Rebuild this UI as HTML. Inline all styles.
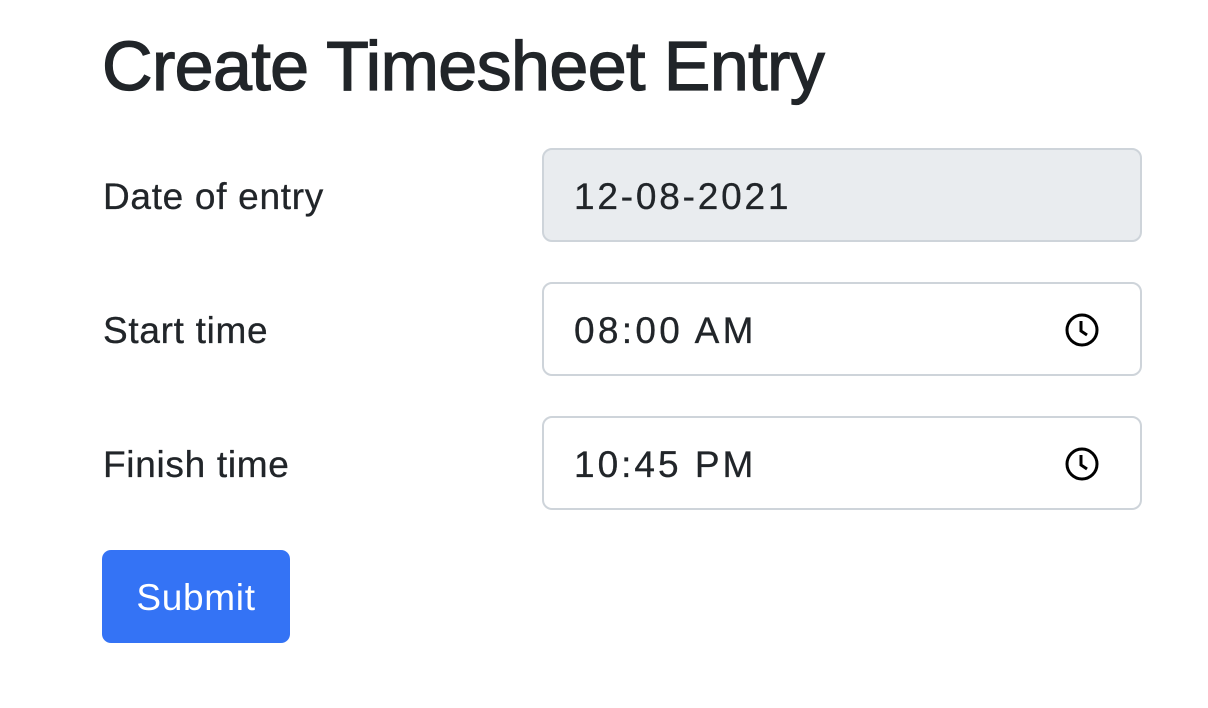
<!DOCTYPE html>
<html><head><style>
body{margin:0;width:1208px;height:708px;background:#fff;font-family:"Liberation Sans",sans-serif;color:#212529;position:relative;overflow:hidden}
h1{position:absolute;left:102px;top:24px;margin:0;font-size:70px;font-weight:400;line-height:84px;letter-spacing:-0.6px;-webkit-text-stroke:1.3px #212529}
.lbl{position:absolute;left:103px;font-size:37px;line-height:44px;letter-spacing:0.7px;-webkit-text-stroke:0.3px #212529}
.inp{position:absolute;left:542px;border:2px solid #ced4da;border-radius:10px;font-size:37px;line-height:94px;padding-left:30px;box-sizing:border-box;width:600px;height:94px;letter-spacing:2.8px;-webkit-text-stroke:0.3px #212529}
.inp svg{position:absolute;right:40px;top:28px}
.btn{position:absolute;left:102px;top:550px;width:188px;height:93px;background:#3473f5;border-radius:9px;color:#fff;font-size:37px;line-height:95px;text-align:center;letter-spacing:0.7px}
</style></head><body>
<h1>Create Timesheet Entry</h1>
<div class="lbl" style="top:175px">Date of entry</div>
<div class="inp" style="top:148px;background:#e9ecef">12-08-2021</div>
<div class="lbl" style="top:309px">Start time</div>
<div class="inp" style="top:282px;letter-spacing:3.3px">08:00 AM<svg width="36" height="36" viewBox="0 0 36 36"><circle cx="18" cy="18" r="15" fill="none" stroke="#000" stroke-width="3"/><path d="M17 9v10l6 4" fill="none" stroke="#000" stroke-width="3"/></svg></div>
<div class="lbl" style="top:443px">Finish time</div>
<div class="inp" style="top:416px;letter-spacing:3px">10:45 PM<svg width="36" height="36" viewBox="0 0 36 36"><circle cx="18" cy="18" r="15" fill="none" stroke="#000" stroke-width="3"/><path d="M17 9v10l6 4" fill="none" stroke="#000" stroke-width="3"/></svg></div>
<div class="btn">Submit</div>
</body></html>
